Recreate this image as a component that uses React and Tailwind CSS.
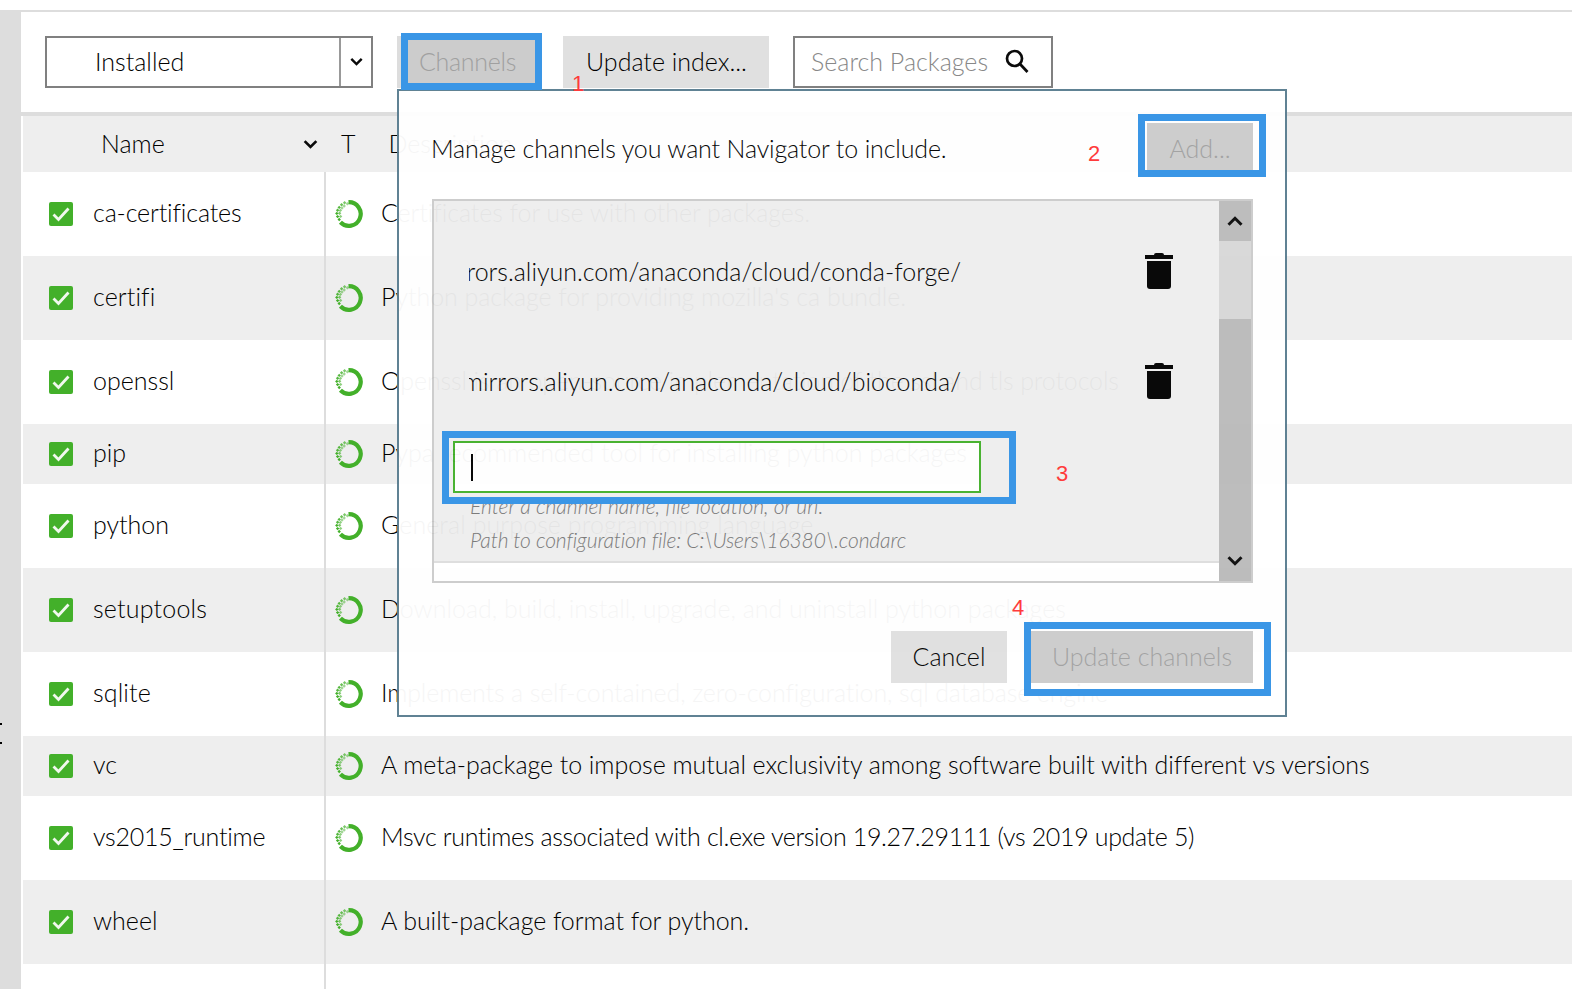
import React from 'react'

const GREEN = '#43b02a'

const packages = [
  { name: 'ca-certificates', nameTrack: 'tracking-[-0.15px]', desc: 'Certificates for use with other packages.', descTrack: 'tracking-[-0.07px]', h: 'h-[84px]' },
  { name: 'certifi', nameTrack: 'tracking-[0.1px]', desc: "Python package for providing mozilla's ca bundle.", descTrack: 'tracking-[-0.04px]', h: 'h-[84px]', alt: true },
  { name: 'openssl', desc: 'Openssl is an open-source implementation of the ssl and tls protocols', descTrack: 'tracking-[-0.13px]', h: 'h-[84px]' },
  { name: 'pip', desc: 'Pypa recommended tool for installing python packages', descTrack: 'tracking-[-0.04px]', h: 'h-[60px]', alt: true },
  { name: 'python', desc: 'General purpose programming language', descTrack: 'tracking-[0.08px]', h: 'h-[84px]' },
  { name: 'setuptools', nameTrack: 'tracking-[0.2px]', desc: 'Download, build, install, upgrade, and uninstall python packages', h: 'h-[84px]', alt: true },
  { name: 'sqlite', nameTrack: 'tracking-[0.15px]', desc: 'Implements a self-contained, zero-configuration, sql database engine', descTrack: 'tracking-[-0.13px]', h: 'h-[84px]' },
  { name: 'vc', desc: 'A meta-package to impose mutual exclusivity among software built with different vs versions', descTrack: 'tracking-[-0.05px]', h: 'h-[60px]', alt: true },
  { name: 'vs2015_runtime', nameTrack: 'tracking-[-0.25px]', desc: 'Msvc runtimes associated with cl.exe version 19.27.29111 (vs 2019 update 5)', descTrack: 'tracking-[-0.35px]', h: 'h-[84px]' },
  { name: 'wheel', desc: 'A built-package format for python.', descTrack: 'tracking-[-0.06px]', h: 'h-[84px]', alt: true },
]

// speckled end of the ring, from solid to faint
const ringDots = [
  [4.2, 19.5, 1], [2.6, 16.6, 1], [5.6, 16.4, 0.6], [1.8, 13.4, 1], [4.6, 13.2, 0.7],
  [2.6, 10.2, 0.9], [5.4, 10.4, 0.6], [4.2, 7.4, 0.9], [7, 8, 0.5], [6.6, 4.8, 0.8],
  [9.2, 6, 0.5], [9.6, 2.8, 0.7], [12.4, 3.8, 0.5],
]

const Chevron = ({ up, className }) => (
  <svg viewBox="0 0 16 10" className={className} fill="none" stroke="#0a0a0a" strokeWidth="3">
    <path d={up ? 'M1.5 8.8 L8 2.3 L14.5 8.8' : 'M1.5 1.2 L8 7.7 L14.5 1.2'} />
  </svg>
)

const Check = () => (
  <div className="flex h-6 w-6 items-center justify-center rounded-[2px] bg-[#43b02a]">
    <svg viewBox="0 0 24 24" className="h-6 w-6" fill="none" stroke="#f1f8ee" strokeWidth="2.8">
      <path d="M4.5 12.5 L9.5 17.5 L19.5 6.5" />
    </svg>
  </div>
)

const Ring = () => (
  <svg viewBox="0 0 28 28" className="h-7 w-7">
    <path d="M13.5 2.2 A11.8 11.8 0 1 1 5.4 22.2" fill="none" stroke={GREEN} strokeWidth="4.2" />
    {ringDots.map(([x, y, o]) => (
      <rect key={`${x}-${y}`} x={x - 1.2} y={y - 1.2} width="2.4" height="2.4" fill={GREEN} opacity={o} transform={`rotate(45 ${x} ${y})`} />
    ))}
  </svg>
)

const Trash = () => (
  <svg viewBox="0 0 28 36" className="h-9 w-7" fill="#000">
    <path d="M9 2 Q9 0 11 0 H17 Q19 0 19 2 H28 V6 H0 V2 Z" />
    <path d="M2 8 H26 V33 Q26 36 23 36 H5 Q2 36 2 33 Z" />
  </svg>
)

const PackageRow = ({ pkg }) => (
  <div className={`flex items-center ${pkg.h} ${pkg.alt ? 'bg-[#eeeeee]' : 'bg-white'}`}>
    <div className="flex h-full w-[301px] items-center pl-[26px]">
      <Check />
      <span className={`mb-[2px] ml-[20px] text-black ${pkg.nameTrack || ''}`}>{pkg.name}</span>
    </div>
    <div className="h-full w-[2px] bg-[#dddddd]" />
    <div className="ml-[9px] flex items-center">
      <Ring />
      <span className={`mb-[2px] ml-[18px] whitespace-nowrap text-black ${pkg.descTrack || ''}`}>{pkg.desc}</span>
    </div>
  </div>
)

const Frame = ({ className }) => (
  <div className={`pointer-events-none absolute border-[7px] border-[#3a96e6] ${className}`} />
)

const Mark = ({ className, children }) => (
  <span className={`absolute font-['Liberation_Sans',sans-serif] text-[22px] font-normal leading-none text-[#ff3b3b] ${className}`}>
    {children}
  </span>
)

const ChannelRow = ({ url, className }) => (
  <div className={`flex items-center ${className}`}>
    <div className="ml-[35px] flex h-10 w-[492px] items-center justify-end overflow-hidden">
      <span className="whitespace-nowrap text-black">{url}</span>
    </div>
    <div className="mb-[2px] ml-[184px]">
      <Trash />
    </div>
  </div>
)

export default function App() {
  return (
    <div className="relative h-[989px] w-[1572px] overflow-hidden bg-white font-['Lato',sans-serif] text-[25px] font-light [font-variant-ligatures:none]">
      <div className="h-[10px]" />
      <div className="h-[2px] bg-[#dddddd]" />
      <div className="flex h-[977px]">
        <div className="relative w-[21px] shrink-0 bg-[#dddddd]">
          <div className="absolute left-0 top-[711px] h-[2px] w-[2px] bg-black" />
          <div className="absolute left-0 top-[730px] h-[2px] w-[2px] bg-black" />
        </div>
        <div className="flex-1">
          {/* toolbar */}
          <div className="flex h-[100px] items-start pl-[24px] pt-[24px]">
            <div className="flex h-[52px] w-[328px] border-2 border-[#808080]">
              <div className="flex flex-1 items-center pl-[48px] text-black">Installed</div>
              <div className="flex w-[32px] items-center justify-center border-l-2 border-[#999]">
                <Chevron className="h-[8px] w-[13px]" />
              </div>
            </div>
            <div className="ml-[24px] h-[52px] w-[142px] bg-[#dddddd]" />
            <div className="ml-[24px] flex h-[52px] w-[206px] items-center bg-[#e0e0e0] pl-[23px] text-black">
              Update index...
            </div>
            <div className="ml-[24px] flex h-[52px] w-[260px] items-center border-2 border-[#808080] pl-[16px] text-[#888]">
              <span>Search Packages</span>
              <svg viewBox="0 0 24 24" className="mb-[2px] ml-[17px] h-6 w-6" fill="none" stroke="#0a0a0a" strokeWidth="2.7">
                <circle cx="9.5" cy="9.5" r="7.5" />
                <path d="M15 15 L22.5 23" />
              </svg>
            </div>
          </div>
          <div className="h-[4px] bg-[#dddddd]" />

          {/* table */}
          <div className="ml-[2px]">
            <div className="flex h-[56px] items-center bg-[#eeeeee] text-black">
              <span className="ml-[78px] w-[202px]">Name</span>
              <Chevron className="h-[9px] w-[15px]" />
              <span className="ml-[23px]">T</span>
              <span className="ml-[33px]">Description</span>
            </div>
            {packages.map((pkg) => (
              <PackageRow key={pkg.name} pkg={pkg} />
            ))}
            <div className="ml-[301px] h-[40px] w-[2px] bg-[#dddddd]" />
          </div>
        </div>
      </div>

      {/* channels dialog */}
      <div className="absolute left-[397px] top-[89px] h-[628px] w-[890px] border-2 border-[#5a7d90] bg-white opacity-[0.96]">
        <div className="flex h-[110px] items-center justify-between pl-[32px] pr-[32px]">
          <span className="mt-[6px] tracking-[-0.15px] text-black">Manage channels you want Navigator to include.</span>
          <div className="flex h-[47px] w-[106px] items-center justify-center bg-[#cccccc] pt-[5px] text-[#a0a0a0]">Add...</div>
        </div>
        <div className="ml-[33px] mt-[-2px] flex h-[384px] w-[821px] border-2 border-[#cccccc]">
          <div className="flex w-[785px] flex-col">
            <div className="h-[360px] bg-[#eeeeee]">
              <ChannelRow url="https://mirrors.aliyun.com/anaconda/cloud/conda-forge/" className="h-[110px] pt-[32px]" />
              <ChannelRow url="https://mirrors.aliyun.com/anaconda/cloud/bioconda/" className="h-[110px] pt-[32px]" />
              <div className="ml-[19px] mt-[20px] flex h-[52px] w-[528px] items-center border-2 border-[#43b02a] bg-white pl-[16px]">
                <div className="h-[27px] w-[2px] bg-black" />
              </div>
              <div className="ml-[36px] mt-[-4px] text-[21px] italic leading-[34px] text-[#777]">
                <div>Enter a channel name, file location, or url.</div>
                <div className="tracking-[-0.12px]">Path to configuration file: C:\Users\16380\.condarc</div>
              </div>
            </div>
            <div className="h-[2px] bg-[#dddddd]" />
          </div>
          <div className="flex w-[32px] flex-col bg-[#bbbbbb]">
            <div className="flex h-[40px] items-center justify-center">
              <Chevron up className="h-[10px] w-[16px]" />
            </div>
            <div className="h-[78px] bg-[#d8d8d8]" />
            <div className="flex-1" />
            <div className="flex h-[40px] items-center justify-center">
              <Chevron className="h-[10px] w-[16px]" />
            </div>
          </div>
        </div>
        <div className="mt-[48px] flex justify-end pr-[32px]">
          <div className="flex h-[52px] w-[116px] items-center justify-center bg-[#e0e0e0] text-black">Cancel</div>
          <div className="ml-[24px] flex h-[52px] w-[222px] items-center justify-center bg-[#cccccc] text-[#a0a0a0]">
            Update channels
          </div>
        </div>
      </div>

      {/* disabled Channels button sits above the dialog edge */}
      <div className="absolute left-[408px] top-[40px] flex h-[43px] w-[127px] items-center bg-[#cccccc] pl-[11px] tracking-[-0.3px] text-[#a0a0a0]">
        Channels
      </div>

      {/* tutorial annotations */}
      <Frame className="left-[401px] top-[33px] h-[57px] w-[141px]" />
      <Frame className="left-[1138px] top-[114px] h-[63px] w-[128px]" />
      <Frame className="left-[442px] top-[431px] h-[73px] w-[574px]" />
      <Frame className="left-[1024px] top-[622px] h-[74px] w-[247px]" />
      <Mark className="left-[572px] top-[73px]">1</Mark>
      <Mark className="left-[1088px] top-[143px]">2</Mark>
      <Mark className="left-[1056px] top-[463px]">3</Mark>
      <Mark className="left-[1012px] top-[597px]">4</Mark>
    </div>
  )
}
